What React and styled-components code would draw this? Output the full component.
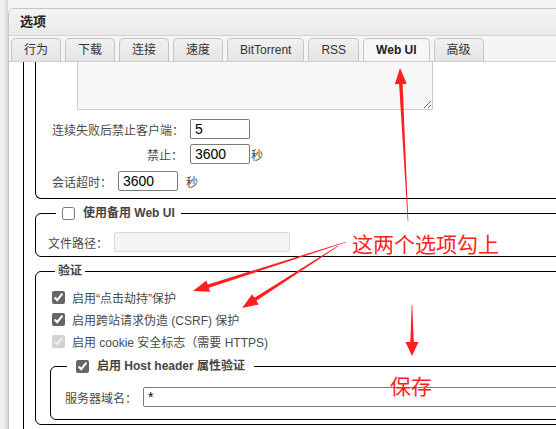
import styled, { createGlobalStyle } from 'styled-components'

const GlobalStyle = createGlobalStyle`
  html, body {
    margin: 0;
    padding: 0;
    overflow: hidden;
    background: #f2f2f2;
  }
`

const FONT = '"Liberation Sans", "Noto Sans CJK SC", sans-serif'

const Stage = styled.div`
  position: relative;
  display: flex;
  width: 556px;
  height: 429px;
  overflow: hidden;
  font-family: ${FONT};
`

const SideStrip = styled.div`
  flex: 0 0 8px;
  background: linear-gradient(to right, #f3f3f3 0, #eeeeee 4px, #d5d5d5 8px);
`

const Main = styled.div`
  display: flex;
  flex-direction: column;
  min-width: 0;
  flex: 1;
`

const TopStrip = styled.div`
  flex: 0 0 8px;
  background: #f3f3f3;
`

const Window = styled.div`
  display: flex;
  flex-direction: column;
  width: 640px;
  height: 421px;
  box-sizing: border-box;
  border: 1px solid #c6c6c6;
  border-bottom: none;
  border-radius: 6px 6px 0 0;
  overflow: hidden;
  background: #fff;
`

const TitleBar = styled.div`
  height: 26px;
  line-height: 26px;
  padding-left: 11px;
  background: linear-gradient(#f4f4f4, #e9e9e9);
  border-bottom: 1px solid #d2d2d2;
  font-size: 13px;
  font-weight: bold;
  color: #222;
`

const TabBar = styled.div`
  display: flex;
  align-items: flex-end;
  gap: 4px;
  height: 25px;
  padding-left: 2px;
  background: #f5f5f5;
  border-bottom: 1px solid #cfcfcf;
`

const Tab = styled.div`
  height: 23px;
  line-height: 23px;
  box-sizing: border-box;
  padding: 0 12px;
  border: 1px solid #c4c4c4;
  border-bottom: none;
  border-radius: 5px 5px 0 0;
  background: ${(p) => (p.$active ? '#f7f7f7' : 'linear-gradient(#f1f1f1, #e4e4e4)')};
  font-size: 12px;
  font-weight: ${(p) => (p.$active ? 'bold' : 'normal')};
  color: ${(p) => (p.$active ? '#222' : '#333')};
`

const Content = styled.div`
  flex: 1;
  overflow: hidden;
  background: #fff;
  color: #4a4a4a;
  font-size: 12px;
`

const OuterBox = styled.div`
  width: 700px;
  margin-left: 14px;
  padding: 0 11px 20px;
  border: 1px solid #000;
  border-top: none;
`

const Section = styled.div`
  padding: 0 0 7px 16px;
  border: 1px solid #000;
  border-top: none;
  border-radius: 0 0 6px 6px;
`

const TextArea = styled.textarea`
  display: block;
  width: 356px;
  height: 68px;
  margin: -20px 0 9px 25px;
  box-sizing: border-box;
  background: #f7f7f7;
  border: 1px solid #cccccc;
  border-radius: 0;
  outline: none;
`

const FormGrid = styled.div`
  display: grid;
  grid-template-columns: 131px auto auto;
  column-gap: 7px;
  row-gap: 5px;
  align-items: center;
  justify-content: start;
`

const Label = styled.span`
  text-align: ${(p) => (p.$right ? 'right' : 'left')};
  width: ${(p) => (p.$w ? `${p.$w}px` : 'auto')};
  white-space: nowrap;
`

const Field = styled.input`
  width: ${(p) => p.$w}px;
  height: 20px;
  box-sizing: border-box;
  padding: 0 4px;
  border: 1px solid ${(p) => (p.disabled ? '#d9d9d9' : '#7a7a7a')};
  border-radius: 2px;
  background: ${(p) => (p.disabled ? '#f4f4f4' : '#fff')};
  font-family: ${FONT};
  font-size: 14px;
  color: #000;
  outline: none;
`

const Unit = styled.span`
  margin-left: ${(p) => p.$gap}px;
`

const Row = styled.div`
  display: flex;
  align-items: center;
  gap: ${(p) => p.$gap || 0}px;
  height: ${(p) => p.$h || 20}px;
  margin-top: ${(p) => p.$mt || 0}px;
`

const Group = styled.fieldset`
  margin: ${(p) => p.$mt}px 0 0 ${(p) => p.$ml || 0}px;
  padding: ${(p) => p.$pad};
  border: 1px solid #000;
  border-radius: 6px;
  min-width: 0;
`

const Legend = styled.legend`
  display: flex;
  align-items: center;
  gap: 8px;
  margin-left: ${(p) => p.$ml}px;
  padding: 0 ${(p) => p.$px}px;
  height: 16px;
  line-height: 16px;
  font-size: 12px;
  font-weight: bold;
  color: #444;
`

const Check = styled.input.attrs({ type: 'checkbox' })`
  width: 13px;
  height: 13px;
  margin: 0;
  accent-color: #666;
`

const CheckList = styled.div`
  display: flex;
  flex-direction: column;
  gap: 1px;
`

const Note = styled.span`
  position: absolute;
  left: ${(p) => p.$x}px;
  top: ${(p) => p.$y}px;
  font-family: "Noto Sans CJK SC", sans-serif;
  font-size: 21px;
  line-height: 30px;
  color: #ff2222;
  white-space: nowrap;
  pointer-events: none;
`

const Overlay = styled.svg`
  position: absolute;
  left: 0;
  top: 0;
  pointer-events: none;
`

const arrowPoints = ([x1, y1], [x2, y2], sw = 3.5, hl = 16, hw = 12) => {
  const len = Math.hypot(x2 - x1, y2 - y1)
  const dx = (x2 - x1) / len
  const dy = (y2 - y1) / len
  const nx = -dy
  const ny = dx
  const bx = x2 - dx * hl
  const by = y2 - dy * hl
  const pts = [
    [x1 + nx * 0.3, y1 + ny * 0.3],
    [bx + nx * (sw / 2), by + ny * (sw / 2)],
    [bx + nx * (hw / 2), by + ny * (hw / 2)],
    [x2, y2],
    [bx - nx * (hw / 2), by - ny * (hw / 2)],
    [bx - nx * (sw / 2), by - ny * (sw / 2)],
    [x1 - nx * 0.3, y1 - ny * 0.3],
  ]
  return pts.map((p) => p.map((v) => v.toFixed(1)).join(',')).join(' ')
}

const arrows = [
  { from: [408, 221], to: [400, 68] },
  { from: [346, 242], to: [193, 291] },
  { from: [338, 246], to: [242, 308] },
  { from: [412, 305], to: [412, 356], hl: 14, hw: 13 },
]

const tabs = ['行为', '下载', '连接', '速度', 'BitTorrent', 'RSS', 'Web UI', '高级']

export default function App() {
  return (
    <>
      <GlobalStyle />
      <Stage>
        <SideStrip />
        <Main>
          <TopStrip />
          <Window>
            <TitleBar>选项</TitleBar>
            <TabBar>
              {tabs.map((t) => (
                <Tab key={t} $active={t === 'Web UI'}>
                  {t}
                </Tab>
              ))}
            </TabBar>
            <Content>
              <OuterBox>
                <Section>
                  <TextArea readOnly />
                  <FormGrid>
                    <Label $right>连续失败后禁止客户端：</Label>
                    <Field $w={60} value="5" readOnly />
                    <span />
                    <Label $right>禁止：</Label>
                    <Field $w={60} value="3600" readOnly />
                    <Unit $gap={-6}>秒</Unit>
                  </FormGrid>
                  <Row $mt={7}>
                    <Label $w={66}>会话超时：</Label>
                    <Field $w={60} value="3600" readOnly />
                    <Unit $gap={8}>秒</Unit>
                  </Row>
                </Section>

                <Group $mt={6} $pad="11px 0 4px 12px">
                  <Legend $ml={8} $px={6}>
                    <Check />
                    使用备用 Web UI
                  </Legend>
                  <Row>
                    <Label $w={66}>文件路径：</Label>
                    <Field $w={176} disabled />
                  </Row>
                </Group>

                <Group $mt={6} $pad="8px 0 4px 16px">
                  <Legend $ml={3} $px={3}>验证</Legend>
                  <CheckList>
                    <Row $h={21} $gap={7}>
                      <Check defaultChecked />
                      启用“点击劫持”保护
                    </Row>
                    <Row $h={21} $gap={7}>
                      <Check defaultChecked />
                      启用跨站请求伪造 (CSRF) 保护
                    </Row>
                    <Row $h={21} $gap={7}>
                      <Check defaultChecked disabled />
                      启用 cookie 安全标志（需要 HTTPS)
                    </Row>
                  </CheckList>
                  <Group $mt={6} $ml={-2} $pad="13px 0 12px 14px">
                    <Legend $ml={2} $px={9}>
                      <Check defaultChecked />
                      启用 Host header 属性验证
                    </Legend>
                    <Row>
                      <Label $w={78}>服务器域名：</Label>
                      <Field $w={500} value="*" readOnly />
                    </Row>
                  </Group>
                </Group>
              </OuterBox>
            </Content>
          </Window>
        </Main>

        <Overlay width="556" height="429" viewBox="0 0 556 429">
          {arrows.map((a, i) => (
            <polygon key={i} points={arrowPoints(a.from, a.to, 3.5, a.hl, a.hw)} fill="#ff1f1f" />
          ))}
        </Overlay>
        <Note $x={352} $y={228}>这两个选项勾上</Note>
        <Note $x={390} $y={370}>保存</Note>
      </Stage>
    </>
  )
}
